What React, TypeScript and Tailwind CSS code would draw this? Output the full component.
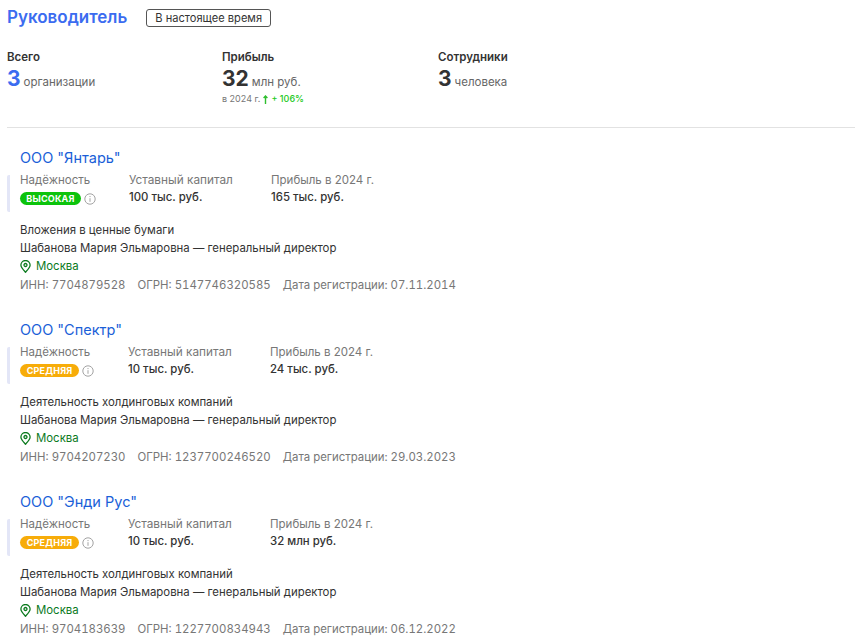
const companies = [
  {
    name: 'ООО "Янтарь"',
    level: "ВЫСОКАЯ",
    badge: "bg-[#0cc30c] w-[61px]",
    firstCol: "w-[109px]",
    capital: "100 тыс. руб.",
    profit: "165 тыс. руб.",
    activity: "Вложения в ценные бумаги",
    inn: "7704879528",
    ogrn: "5147746320585",
    date: "07.11.2014",
  },
  {
    name: 'ООО "Спектр"',
    level: "СРЕДНЯЯ",
    badge: "bg-[#f7ac09] w-[59px]",
    firstCol: "w-[108px]",
    capital: "10 тыс. руб.",
    profit: "24 тыс. руб.",
    activity: "Деятельность холдинговых компаний",
    inn: "9704207230",
    ogrn: "1237700246520",
    date: "29.03.2023",
  },
  {
    name: 'ООО "Энди Рус"',
    level: "СРЕДНЯЯ",
    badge: "bg-[#f7ac09] w-[59px]",
    firstCol: "w-[108px]",
    capital: "10 тыс. руб.",
    profit: "32 млн руб.",
    activity: "Деятельность холдинговых компаний",
    inn: "9704183639",
    ogrn: "1227700834943",
    date: "06.12.2022",
  },
];

function InfoIcon() {
  return (
    <svg width="12" height="12" viewBox="0 0 12 12" fill="none" stroke="#a3a3a3" strokeWidth="1">
      <circle cx="6" cy="6" r="5.2" />
      <path d="M6 5.2v3.6M6 3v1.1" />
    </svg>
  );
}

function PinIcon() {
  return (
    <svg width="11" height="13" viewBox="0 0 11 13" fill="none" stroke="#0b7a1e" strokeWidth="1.3">
      <path d="M5.5 12.2C3.4 10 .9 7.7.9 5.1a4.6 4.6 0 0 1 9.2 0c0 2.6-2.5 4.9-4.6 7.1z" />
      <circle cx="5.5" cy="5" r="1.5" />
    </svg>
  );
}

function Stat({ title, value, unit, accent }: { title: string; value: string; unit: string; accent?: boolean }) {
  return (
    <div>
      <div className="text-[11.5px] leading-[14px] font-semibold text-[#333]">{title}</div>
      <div className="mt-[2px] flex h-[26px] items-baseline gap-[3px]">
        <span className={`text-[21px] leading-[26px] font-bold ${accent ? "text-[#3b6cf0]" : "text-[#333]"}`}>{value}</span>
        <span className="text-[11.5px] text-[#666]">{unit}</span>
      </div>
    </div>
  );
}

function Company({ c }: { c: (typeof companies)[number] }) {
  return (
    <div className="h-[172px]">
      <a className="block pl-[13px] text-[14.5px] leading-[20px] text-[#1a5fd8]">{c.name}</a>
      <div className="mt-[7px] flex h-[37px] rounded-l-[2px] border-l-[3px] border-[#e3e6f7] pl-[10px]">
        <div className={c.firstCol}>
          <div className="text-[11.5px] leading-[10px] text-[#777]">Надёжность</div>
          <div className="mt-[7px] flex items-center gap-[3px]">
            <span className={`${c.badge} flex h-[13px] items-center justify-center rounded-full text-[9px] font-bold tracking-[0.2px] text-white`}>
              {c.level}
            </span>
            <InfoIcon />
          </div>
        </div>
        <div className="w-[142px]">
          <div className="text-[11.8px] leading-[10px] text-[#777]">Уставный капитал</div>
          <div className="mt-[4px] text-[11.4px] leading-[16px] font-medium text-[#333]">{c.capital}</div>
        </div>
        <div>
          <div className="text-[11.5px] leading-[10px] text-[#777]">Прибыль в 2024 г.</div>
          <div className="mt-[4px] text-[11.4px] leading-[16px] font-medium text-[#333]">{c.profit}</div>
        </div>
      </div>
      <div className="mt-[9px] pl-[13px] text-[11.4px] leading-[18.2px] text-[#333]">
        <div>{c.activity}</div>
        <div>Шабанова Мария Эльмаровна — генеральный директор</div>
        <div className="flex items-center gap-[5px] text-[#0b7a1e]">
          <PinIcon />
          Москва
        </div>
        <div className="flex gap-[12px] text-[#777] tabular-nums">
          <span>ИНН: {c.inn}</span>
          <span>ОГРН: {c.ogrn}</span>
          <span>Дата регистрации: {c.date}</span>
        </div>
      </div>
    </div>
  );
}

export default function App() {
  return (
    <div className="h-[644px] overflow-hidden bg-white pr-[10px] pl-[7px] font-['Inter',sans-serif]">
      <div className="flex items-center gap-[19px] pt-[8px]">
        <h1 className="mb-[2px] text-[17px] leading-[18px] font-semibold text-[#3b6cf0]">Руководитель</h1>
        <span className="rounded-[3px] border border-[#555] px-[8px] text-[11.1px] leading-[16px] text-[#333]">В настоящее время</span>
      </div>
      <div className="mt-[22px] flex h-[78px] border-b border-[#e2e2e2]">
        <div className="w-[215px]">
          <Stat title="Всего" value="3" unit="организации" accent />
        </div>
        <div className="w-[216px]">
          <Stat title="Прибыль" value="32" unit="млн руб." />
          <div className="mt-[1px] flex items-center text-[9px] leading-[12px] text-[#777]">
            в 2024 г.
            <svg className="mx-[3px]" width="5" height="9" viewBox="0 0 5 9" fill="none" stroke="#2fbf2f" strokeWidth="1.4">
              <path d="M2.5 9V1M.6 3l1.9-2 1.9 2" />
            </svg>
            <span className="font-medium text-[#22c922]">+ 106%</span>
          </div>
        </div>
        <Stat title="Сотрудники" value="3" unit="человека" />
      </div>
      <div className="mt-[20px]">
        {companies.map((c) => (
          <Company key={c.name} c={c} />
        ))}
      </div>
    </div>
  );
}
